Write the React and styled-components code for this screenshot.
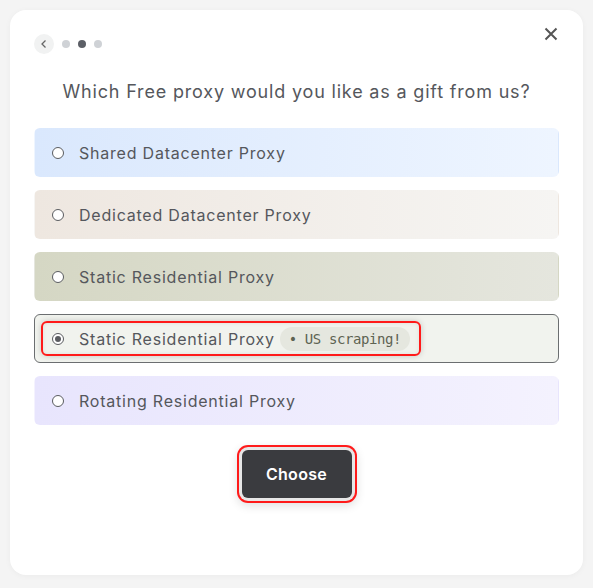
import React, { useState } from "react";
import styled, { createGlobalStyle } from "styled-components";

const Global = createGlobalStyle`
  html, body {
    margin: 0;
    padding: 0;
    background: #f4f4f4;
    font-family: Inter, "Open Sans", sans-serif;
  }
`;

const options = [
  { label: "Shared Datacenter Proxy", from: "#dae8fd", to: "#eef5ff" },
  { label: "Dedicated Datacenter Proxy", from: "#eee7e0", to: "#f6f5f3" },
  { label: "Static Residential Proxy", from: "#d5d7c4", to: "#e5e6de" },
  { label: "Static Residential Proxy", tag: "US scraping!", from: "#f1f3ee", to: "#f1f3ee" },
  { label: "Rotating Residential Proxy", from: "#e8e5fd", to: "#f4f2fe" },
];

const App = () => {
  const [selected, setSelected] = useState(3);

  return (
    <>
      <Global />
      <Page>
        <Card>
          <TopBar>
            <Steps>
              <BackButton aria-label="Back">
                <svg width="10" height="10" viewBox="0 0 10 10">
                  <path d="M6.5 1.5 L3 5 L6.5 8.5" fill="none" stroke="#666" strokeWidth="1.3" />
                </svg>
              </BackButton>
              <Dot />
              <Dot active />
              <Dot />
            </Steps>
            <CloseButton aria-label="Close">
              <svg width="14" height="14" viewBox="0 0 14 14">
                <path d="M1.5 1.5 L12.5 12.5 M12.5 1.5 L1.5 12.5" stroke="#555" strokeWidth="2" />
              </svg>
            </CloseButton>
          </TopBar>

          <Title>Which Free proxy would you like as a gift from us?</Title>

          <List>
            {options.map((o, i) => (
              <Option
                key={i}
                $from={o.from}
                $to={o.to}
                $selected={selected === i}
                onClick={() => setSelected(i)}
              >
                <OptionInner $selected={selected === i}>
                  <Radio $checked={selected === i} />
                  <Label>{o.label}</Label>
                  {o.tag && <Tag>• {o.tag}</Tag>}
                </OptionInner>
              </Option>
            ))}
          </List>

          <Footer>
            <ChooseButton>Choose</ChooseButton>
          </Footer>
        </Card>
      </Page>
    </>
  );
};

export default App;

const Page = styled.div`
  padding: 10px;
  height: 588px;
  box-sizing: border-box;
`;

const Card = styled.div`
  background: #fff;
  border-radius: 16px;
  box-shadow: 0 1px 6px rgba(0, 0, 0, 0.04);
  height: 565px;
  box-sizing: border-box;
  padding: 24px 24px 0 24px;
  display: flex;
  flex-direction: column;
`;

const TopBar = styled.div`
  display: flex;
  justify-content: space-between;
  align-items: flex-start;
  height: 20px;
`;

const Steps = styled.div`
  display: flex;
  align-items: center;
  gap: 8px;
`;

const BackButton = styled.button`
  width: 20px;
  height: 20px;
  border-radius: 50%;
  border: none;
  background: #f1f2f2;
  display: flex;
  align-items: center;
  justify-content: center;
  padding: 0;
`;

const Dot = styled.span`
  width: 8px;
  height: 8px;
  border-radius: 50%;
  background: ${(p) => (p.active ? "#5c5f66" : "#cfd2d6")};
`;

const CloseButton = styled.button`
  border: none;
  background: none;
  padding: 0;
  margin-top: -7px;
  margin-right: 1px;
  width: 14px;
  height: 14px;
  display: flex;
`;

const Title = styled.h2`
  margin: 25px 0 0;
  text-align: center;
  font-size: 18px;
  font-weight: 400;
  color: #55575c;
  letter-spacing: 0.82px;
  line-height: 26px;
`;

const List = styled.div`
  margin-top: 23px;
  display: flex;
  flex-direction: column;
  gap: 13px;
`;

const Option = styled.div`
  height: 49px;
  box-sizing: border-box;
  border-radius: 6px;
  background: linear-gradient(90deg, ${(p) => p.$from}, ${(p) => p.$to});
  border: 1px solid ${(p) => (p.$selected ? "#6b6e70" : "transparent")};
  display: flex;
  align-items: center;
  padding: 0 6px;
  cursor: pointer;
`;

const OptionInner = styled.div`
  display: flex;
  align-items: center;
  height: 35px;
  box-sizing: border-box;
  padding: 0 9px 0 ${(p) => (p.$selected ? "9px" : "11px")};
  border-radius: 6px;
  ${(p) =>
    p.$selected &&
    `
    border: 2px solid #ff1a1a;
    box-shadow: 0 0 6px rgba(0, 0, 0, 0.18), inset 0 0 4px rgba(0, 0, 0, 0.08);
  `}
`;

const Radio = styled.span`
  width: 12px;
  height: 12px;
  border-radius: 50%;
  box-sizing: border-box;
  border: 1.3px solid #5a5c60;
  flex-shrink: 0;
  position: relative;
  background: #fff;
  ${(p) =>
    p.$checked &&
    `
    &::after {
      content: "";
      position: absolute;
      inset: 2px;
      border-radius: 50%;
      background: #5a5c60;
    }
  `}
`;

const Label = styled.span`
  margin-left: 15px;
  font-size: 16px;
  color: #55575c;
  letter-spacing: 0.78px;
  white-space: nowrap;
`;

const Tag = styled.span`
  margin-left: 5px;
  height: 24px;
  padding: 0 9px;
  border-radius: 12px;
  background: #e5e7df;
  font-family: "DejaVu Sans Mono", monospace;
  font-size: 14px;
  letter-spacing: -0.4px;
  color: #5d6352;
  display: flex;
  align-items: center;
  white-space: nowrap;
`;

const Footer = styled.div`
  display: flex;
  justify-content: center;
  margin-top: 25px;
`;

const ChooseButton = styled.button`
  width: 110px;
  height: 48px;
  border: none;
  border-radius: 6px;
  background: #3a3b3f;
  color: #fff;
  font-family: Inter, sans-serif;
  font-weight: 600;
  font-size: 16px;
  letter-spacing: 0.3px;
  box-shadow: 0 0 0 3px #e6e6e6, 0 0 0 5px #ff1a1a, 0 3px 10px 5px rgba(0, 0, 0, 0.12);
`;
